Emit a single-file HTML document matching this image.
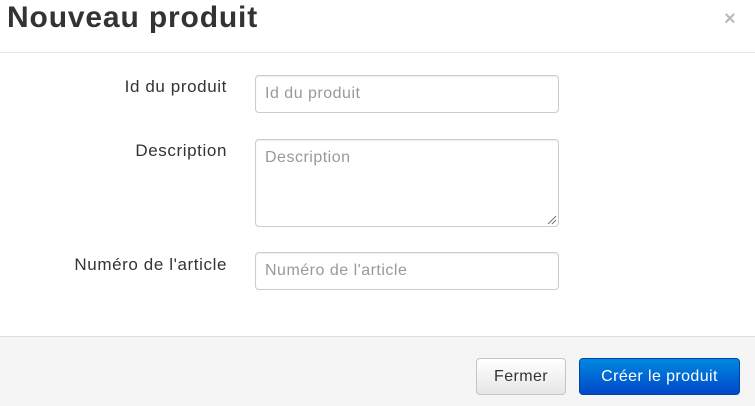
<!DOCTYPE html><html><head><style>
body{margin:0;width:755px;height:406px;background:#fff;font-family:"Liberation Sans",sans-serif;position:relative;overflow:hidden}
.t{position:absolute;left:7px;top:1px;font-size:30px;letter-spacing:0.85px;font-weight:bold;color:#333}
.x{position:absolute;left:724px;top:8px;font-size:20px;color:#bbb;font-weight:bold}
.hl{position:absolute;left:0;right:0;top:52px;border-top:1px solid #e5e5e5}
.l{position:absolute;right:528px;font-size:17px;letter-spacing:0.6px;color:#333}
.i{position:absolute;left:255px;width:304px;border:1px solid #ccc;border-radius:4px;box-shadow:inset 0 1px 1px rgba(0,0,0,.075);font-size:16px;letter-spacing:0.5px;color:#999;box-sizing:border-box;padding:9px 9px}
.f{position:absolute;left:0;right:0;top:336px;bottom:0;background:#f5f5f5;border-top:1px solid #ddd}
.b{position:absolute;top:358px;height:37px;border-radius:4px;box-sizing:border-box;font-size:16px;letter-spacing:0.4px;text-align:center;line-height:35px}
</style></head><body>
<div class="t">Nouveau produit</div><div class="x">×</div>
<div class="hl"></div>
<div class="l" style="top:77px">Id du produit</div>
<div class="i" style="top:75px;height:38px">Id du produit</div>
<div class="l" style="top:141px">Description</div>
<div class="i" style="top:139px;height:88px">Description</div>
<svg style="position:absolute;left:547px;top:215px" width="10" height="10"><path d="M1 9L9 1M5 9L9 5" stroke="#777" stroke-width="1"/></svg>
<div class="l" style="top:255px">Numéro de l'article</div>
<div class="i" style="top:252px;height:38px">Numéro de l'article</div>
<div class="f"></div>
<div class="b" style="left:476px;width:90px;border:1px solid #c5c5c5;background:linear-gradient(#fff,#e6e6e6);color:#333">Fermer</div>
<div class="b" style="left:579px;width:161px;border:1px solid #0044aa;background:linear-gradient(#0088e0,#0048c8);color:#fff">Créer le produit</div>
</body></html>
